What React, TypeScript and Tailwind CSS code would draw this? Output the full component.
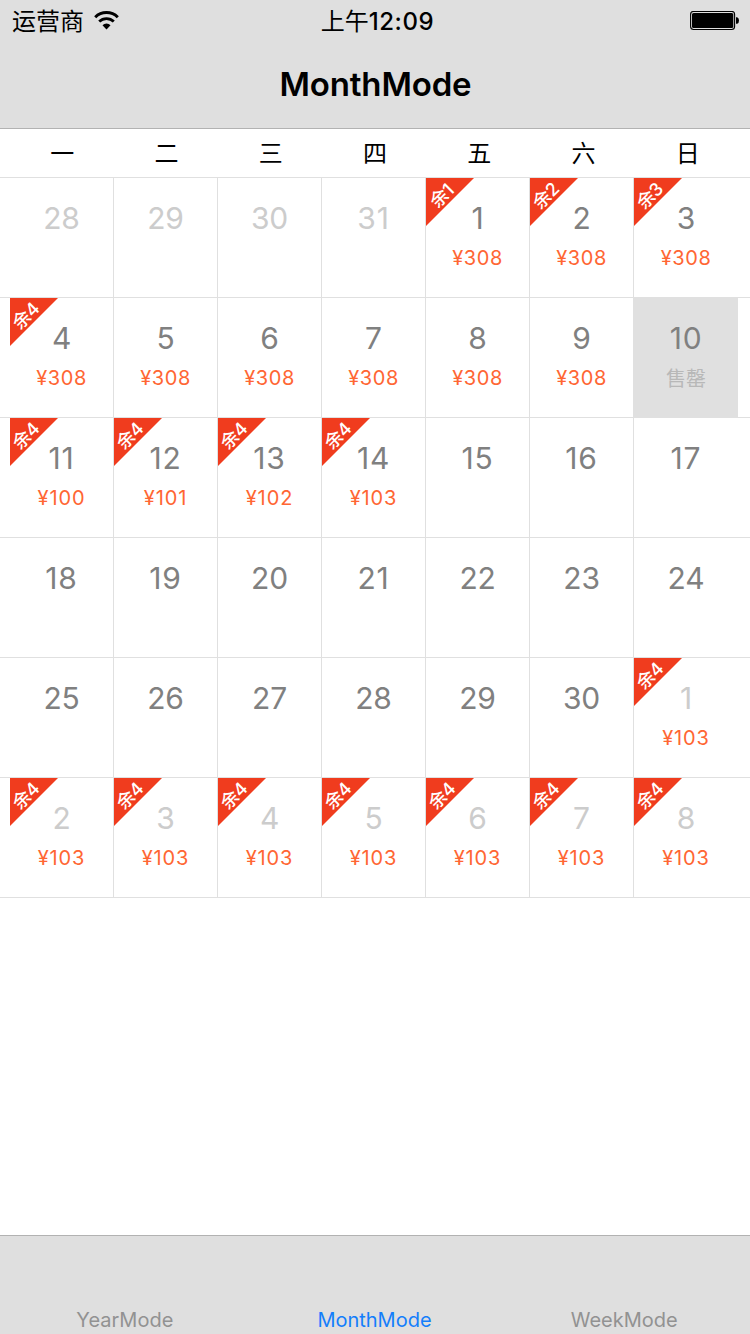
type Day = { n: number; left?: number; price?: string; muted?: boolean; soldOut?: boolean };

const WEEKDAYS = ["一", "二", "三", "四", "五", "六", "日"];

const WEEKS: Day[][] = [
  [
    { n: 28, muted: true }, { n: 29, muted: true }, { n: 30, muted: true }, { n: 31, muted: true },
    { n: 1, left: 1, price: "308" }, { n: 2, left: 2, price: "308" }, { n: 3, left: 3, price: "308" },
  ],
  [
    { n: 4, left: 4, price: "308" }, { n: 5, price: "308" }, { n: 6, price: "308" }, { n: 7, price: "308" },
    { n: 8, price: "308" }, { n: 9, price: "308" }, { n: 10, soldOut: true },
  ],
  [
    { n: 11, left: 4, price: "100" }, { n: 12, left: 4, price: "101" }, { n: 13, left: 4, price: "102" },
    { n: 14, left: 4, price: "103" }, { n: 15 }, { n: 16 }, { n: 17 },
  ],
  [{ n: 18 }, { n: 19 }, { n: 20 }, { n: 21 }, { n: 22 }, { n: 23 }, { n: 24 }],
  [{ n: 25 }, { n: 26 }, { n: 27 }, { n: 28 }, { n: 29 }, { n: 30 }, { n: 1, left: 4, price: "103", muted: true }],
  [2, 3, 4, 5, 6, 7, 8].map((n) => ({ n, left: 4, price: "103", muted: true })),
];

const TABS = ["YearMode", "MonthMode", "WeekMode"];

function WifiIcon() {
  return (
    <svg width="26" height="20" viewBox="0 0 26 20" className="ml-[10px]">
      <path d="M1.2 6.2A16.2 16.2 0 0 1 23.8 6.2" fill="none" stroke="#000" strokeWidth="3" />
      <path d="M5.2 10.6A10.5 10.5 0 0 1 19.8 10.6" fill="none" stroke="#000" strokeWidth="2.8" />
      <path d="M8.5 14.2A5.8 5.8 0 0 1 16.5 14.2L12.5 18.4Z" fill="#000" />
    </svg>
  );
}

function BatteryIcon() {
  return (
    <svg width="50" height="20" viewBox="0 0 50 20">
      <rect x="0.6" y="0.5" width="44" height="18" rx="3" fill="none" stroke="#000" strokeWidth="1.1" />
      <rect x="2" y="2" width="41.3" height="15" rx="1.6" fill="#000" />
      <path d="M46 6.2h1.2q1.8 .8 1.8 3.3t-1.8 3.3H46z" fill="#000" />
    </svg>
  );
}

function DayCell({ day, last }: { day: Day; last: boolean }) {
  const hasOne = day.n > 9 && String(day.n).includes("1");
  return (
    <div
      className={`relative flex h-[119px] w-[104px] flex-col items-center ${last ? "" : "border-r border-[#e0e0e0]"} ${day.soldOut ? "bg-[#e0e0e0]" : ""}`}
    >
      <div
        className={`mt-[26px] h-[35px] text-[30px] leading-[29px] font-[380] ${hasOne ? "tracking-[0.8px]" : "tracking-[-0.2px]"} ${day.muted ? "text-[#cccccc]" : "text-[#808080]"}`}
      >
        {day.n}
      </div>
      {day.price && (
        <div
          className={`h-10 text-[20px] leading-[38px] text-[#ff6633] ${day.price.includes("1") ? "tracking-[0.9px]" : "tracking-[0.6px]"}`}
        >
          {`¥${day.price}`}
        </div>
      )}
      {day.soldOut && <div className="h-10 text-[20px] leading-10 text-[#b8b8b8]">售罄</div>}
      {day.left && (
        <div className="absolute top-0 left-0 h-12 w-12 bg-[#f03c1e] [clip-path:polygon(0_0,100%_0,0_100%)]">
          <div className="absolute top-[8px] left-0 flex h-[20px] w-8 -rotate-45 justify-center text-[18px] leading-[20px] font-medium tracking-[-0.5px] text-white">
            {`余${day.left}`}
          </div>
        </div>
      )}
    </div>
  );
}

export default function App() {
  return (
    <div className="flex h-[1334px] w-[750px] flex-col bg-white font-['Inter','Noto_Sans_CJK_SC',sans-serif] whitespace-nowrap">
      <header className="h-[129px] border-b border-[#b2b2b2] bg-[#dfdfdf]">
        <div className="grid h-10 grid-cols-3 items-center">
          <div className="flex items-center pl-3 text-[24px] leading-10">
            <span className="pt-[2px]">运营商</span>
            <WifiIcon />
          </div>
          <div className="pt-px pl-[5px] text-center text-[24px] leading-10 font-medium tracking-[0.6px]">
            <span className="font-normal tracking-normal">上午</span>12:09
          </div>
          <div className="flex justify-end pr-[10px]">
            <BatteryIcon />
          </div>
        </div>
        <h1 className="pt-[20px] pl-px text-center text-[33px] leading-[48px] font-semibold tracking-[-0.15px]">
          MonthMode
        </h1>
      </header>

      <div className="grid h-[49px] grid-cols-7 border-b border-[#e0e0e0] px-[10px] pt-px text-center text-[24px] leading-[48px]">
        {WEEKDAYS.map((d) => (
          <div key={d}>{d}</div>
        ))}
      </div>

      <main className="flex-1">
        {WEEKS.map((week, i) => (
          <div key={i} className="flex border-b border-[#e0e0e0] pl-[10px]">
            {week.map((day, j) => (
              <DayCell key={j} day={day} last={j === 6} />
            ))}
          </div>
        ))}
      </main>

      <nav className="grid h-[99px] grid-cols-3 items-end border-t border-[#b2b2b2] bg-[#dfdfdf] pr-px text-center text-[20px] leading-7">
        {TABS.map((tab) => (
          <div key={tab} className={tab === "MonthMode" ? "text-[#147efb]" : "text-[#929292]"}>
            {tab}
          </div>
        ))}
      </nav>
    </div>
  );
}
